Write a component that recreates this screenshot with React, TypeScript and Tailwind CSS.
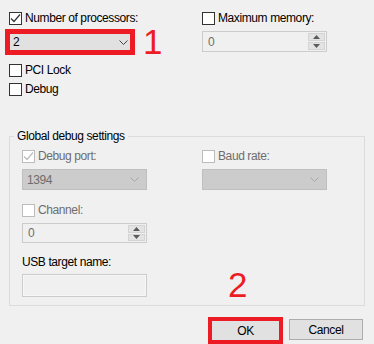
type CheckProps = {
  label: string;
  checked?: boolean;
  disabled?: boolean;
  className?: string;
};

function Check({ label, checked, disabled, className = "" }: CheckProps) {
  return (
    <div className={`flex items-center h-[13px] ${className}`}>
      <span
        className={`w-[13px] h-[13px] border bg-white flex items-center justify-center shrink-0 ${
          disabled ? "border-[#bcbcbc]" : "border-[#333333]"
        }`}
      >
        {checked && (
          <svg width="11" height="11" viewBox="0 0 11 11">
            <path
              d="M1 5.5 L4 8.5 L10 1.5"
              fill="none"
              stroke={disabled ? "#bcbcbc" : "#333333"}
              strokeWidth="1.2"
            />
          </svg>
        )}
      </span>
      <span
        className={`ml-[3px] whitespace-nowrap leading-[15px] ${
          disabled ? "text-[#6d6d6d]" : "text-black"
        }`}
      >
        {label}
      </span>
    </div>
  );
}

function Chevron({ color }: { color: string }) {
  return (
    <svg width="9" height="5" viewBox="0 0 9 5">
      <path d="M0.5 0.5 L4.5 4.5 L8.5 0.5" fill="none" stroke={color} strokeWidth="1" />
    </svg>
  );
}

function Spin({ className = "", h = "h-[21px]" }: { className?: string; h?: string }) {
  return (
    <div className={`w-[125px] ${h} border border-[#cccccc] bg-[#f0f0f0] flex ${className}`}>
      <span className="flex-1 pl-[5px] text-[#6d6d6d] flex items-center">0</span>
      <div className="w-[18px] flex flex-col gap-[1px] py-[1px] pr-[1px]">
        <div className="flex-1 bg-[#e3e3e3] border border-[#d4d4d4] flex items-center justify-center">
          <svg width="7" height="4" viewBox="0 0 7 4">
            <path d="M0 4 L3.5 0 L7 4 Z" fill="#5a5a5a" />
          </svg>
        </div>
        <div className="flex-1 bg-[#e3e3e3] border border-[#d4d4d4] flex items-center justify-center">
          <svg width="7" height="4" viewBox="0 0 7 4">
            <path d="M0 0 L7 0 L3.5 4 Z" fill="#5a5a5a" />
          </svg>
        </div>
      </div>
    </div>
  );
}

function DisabledCombo({ text }: { text?: string }) {
  return (
    <div className="w-[125px] h-[21px] border border-[#bfbfbf] bg-[#cccccc] flex items-center justify-between pl-[4px] pr-[7px]">
      <span className="text-[#6d6d6d]">{text}</span>
      <Chevron color="#a6a6a6" />
    </div>
  );
}

export default function App() {
  return (
    <div className="relative w-[374px] h-[344px] bg-[#f0f0f0] overflow-hidden font-['Liberation_Sans',Arial,sans-serif] text-[12px] tracking-[-0.4px] text-black">
      {/* Top options */}
      <div className="flex pt-[12px] pl-[9px]">
        <div className="w-[193px] flex flex-col">
          <Check label="Number of processors:" checked />
          <div className="mt-[4px] -ml-[4px] w-[130px] h-[26px] border-[5px] border-[#ed1c24] bg-[#e1e1e1] flex items-center justify-between pl-[3px] pr-[2px]">
            <span>2</span>
            <Chevron color="#444444" />
          </div>
          <Check label="PCI Lock" className="mt-[9px]" />
          <Check label="Debug" className="mt-[6px]" />
        </div>
        <div className="flex flex-col">
          <Check label="Maximum memory:" />
          <Spin className="mt-[6px]" />
        </div>
      </div>

      {/* Global debug settings */}
      <fieldset className="ml-[9px] mt-[33px] w-[356px] border border-[#dcdcdc] p-0 m-0">
        <legend className="ml-[4px] px-[3px] leading-[15px]">Global debug settings</legend>
        <div className="pl-[12px] pt-[6px] pb-[8px]">
          <div className="flex">
            <div className="w-[180px] flex flex-col">
              <Check label="Debug port:" checked disabled />
              <div className="mt-[6px]">
                <DisabledCombo text="1394" />
              </div>
            </div>
            <div className="flex flex-col">
              <Check label="Baud rate:" disabled />
              <div className="mt-[6px]">
                <DisabledCombo />
              </div>
            </div>
          </div>
          <Check label="Channel:" disabled className="mt-[14px]" />
          <Spin className="mt-[6px]" h="h-[20px]" />
          <div className="mt-[12px] leading-[15px]">USB target name:</div>
          <div className="mt-[4px] w-[125px] h-[23px] border border-[#cccccc] bg-[#f0f0f0] shadow-[inset_0_0_0_1px_#f7f7f7]" />
        </div>
      </fieldset>

      {/* Buttons */}
      <div className="flex justify-end items-start gap-[6px] pr-[11px] mt-[11px]">
        <div className="w-[75px] h-[27px] border-[4px] border-[#ed1c24] bg-[#e1e1e1] flex items-center justify-center">
          OK
        </div>
        <button className="mt-[2px] w-[74px] h-[21px] border border-[#adadad] bg-[#e1e1e1] flex items-center justify-center">
          Cancel
        </button>
      </div>

      {/* Annotations */}
      <span className="absolute left-[143px] top-[24px] text-[35px] leading-[35px] tracking-normal text-[#ed1c24]">1</span>
      <span className="absolute left-[228px] top-[267px] text-[35px] leading-[35px] tracking-normal text-[#ed1c24]">2</span>
    </div>
  );
}
